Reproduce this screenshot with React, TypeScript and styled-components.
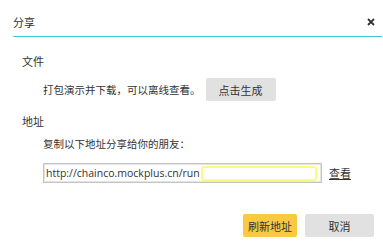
import React from "react";
import styled, { createGlobalStyle } from "styled-components";

const Global = createGlobalStyle`
  html, body { margin: 0; padding: 0; background: #fff; }
  body { font-family: "Noto Sans CJK SC", "Open Sans", sans-serif; color: #333; }
  * { box-sizing: border-box; }
`;

const Dialog = styled.div`
  width: 383px;
  height: 246px;
  display: flex;
  flex-direction: column;
  background: #fff;
`;

const Header = styled.div`
  height: 37px;
  margin: 0 1px 0 13px;
  padding-top: 7px;
  display: flex;
  align-items: center;
  justify-content: space-between;
  border-bottom: 1px solid #3fcbdc;
`;

const Title = styled.span`
  font-size: 11px;
  line-height: 16px;
  color: #333;
`;

const Close = styled.span`
  width: 8px;
  height: 8px;
  margin-right: 7px;
  display: flex;
`;

const Body = styled.div`
  padding-left: 22px;
  display: flex;
  flex-direction: column;
`;

const Label = styled.div<{ $top: number }>`
  margin-top: ${(p) => p.$top}px;
  font-size: 11px;
  line-height: 16px;
`;

const Row = styled.div<{ $top: number }>`
  margin-top: ${(p) => p.$top}px;
  padding-left: 21px;
  display: flex;
  align-items: center;
`;

const Text = styled.span`
  font-size: 10.5px;
  line-height: 16px;
`;

const Button = styled.button<{ $primary?: boolean; $w: number }>`
  width: ${(p) => p.$w}px;
  height: 23px;
  border: none;
  border-radius: 2px;
  padding: 0;
  font-family: "Noto Sans CJK SC", sans-serif;
  font-size: 11px;
  color: #333;
  background: ${(p) => (p.$primary ? "#f9c944" : "#e1e1e1")};
`;

const GenerateButton = styled(Button)`
  margin-left: 5px;
`;

const Input = styled.div`
  width: 279px;
  height: 20px;
  border: 1px solid #c4c4c4;
  box-shadow: inset 0 0 0 1px #e4e4e4;
  display: flex;
  align-items: center;
  padding: 0 4px 0 2px;
  gap: 1px;
`;

const Url = styled.span`
  font-family: "Open Sans", sans-serif;
  font-size: 10.5px;
  color: #333;
  white-space: nowrap;
`;

const Highlight = styled.span`
  flex: 1;
  height: 15px;
  border: 2px solid #fcfc78;
  border-radius: 3px;
`;

const Link = styled.a`
  margin-left: 7px;
  font-size: 11px;
  color: #333;
  text-decoration: underline;
`;

const Footer = styled.div`
  margin-top: 31px;
  padding-right: 9px;
  display: flex;
  justify-content: flex-end;
  gap: 8px;
`;

export default function App() {
  return (
    <>
      <Global />
      <Dialog>
        <Header>
          <Title>分享</Title>
          <Close>
            <svg width="8" height="8" viewBox="0 0 8 8">
              <path d="M1 1L7 7M7 1L1 7" stroke="#333" strokeWidth="1.8" />
            </svg>
          </Close>
        </Header>
        <Body>
          <Label $top={16}>文件</Label>
          <Row $top={9}>
            <Text>打包演示并下载，可以离线查看。</Text>
            <GenerateButton $w={70}>点击生成</GenerateButton>
          </Row>
          <Label $top={12}>地址</Label>
          <Row $top={7}>
            <Text>复制以下地址分享给你的朋友：</Text>
          </Row>
          <Row $top={11}>
            <Input>
              <Url>http://chainco.mockplus.cn/run</Url>
              <Highlight />
            </Input>
            <Link>查看</Link>
          </Row>
        </Body>
        <Footer>
          <Button $primary $w={54}>刷新地址</Button>
          <Button $w={69}>取消</Button>
        </Footer>
      </Dialog>
    </>
  );
}
